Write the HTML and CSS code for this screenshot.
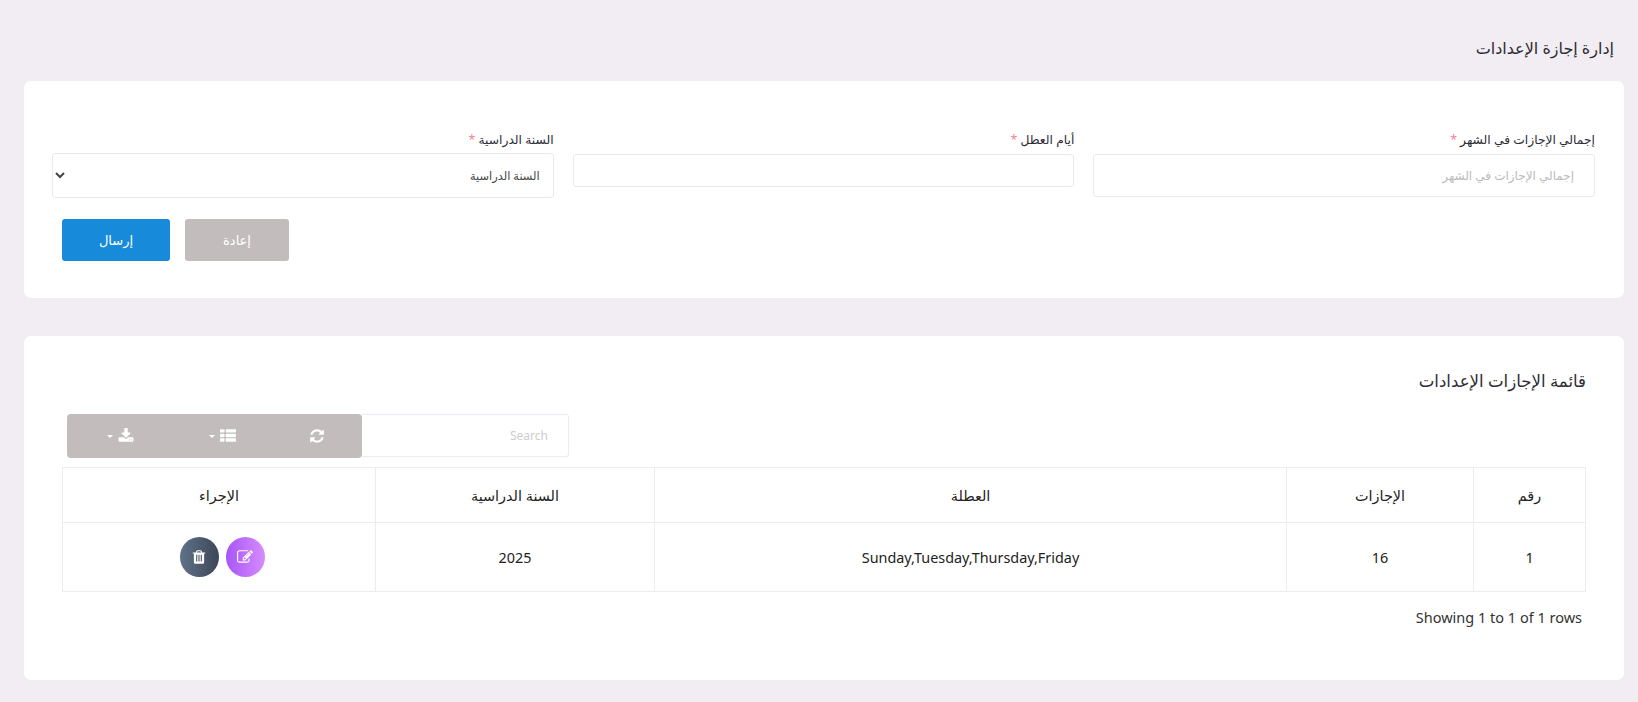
FILE: index.html
```html
<!DOCTYPE html>
<html lang="ar" dir="rtl">
<head>
  <meta charset="UTF-8"/>
  <meta name="viewport" content="width=device-width,initial-scale=1.0"/>
  <title>إدارة إجازة الإعدادات</title>
  <link rel="stylesheet" href="styles.css">
</head>
<body>
<h1 class="page-title">إدارة إجازة الإعدادات</h1>

<section class="card form-card">
  <form class="form-grid">
    <div class="field">
      <label for="total">إجمالي الإجازات في الشهر <span class="req">*</span></label>
      <input type="text" id="total" class="tall" placeholder="إجمالي الإجازات في الشهر"/>
    </div>
    <div class="field">
      <label for="holidays">أيام العطل <span class="req">*</span></label>
      <input type="text" id="holidays"/>
    </div>
    <div class="field">
      <label for="year">السنة الدراسية <span class="req">*</span></label>
      <select id="year"><option>السنة الدراسية</option></select>
    </div>
  </form>
  <div class="form-actions">
    <button type="button" class="btn btn-reset">إعادة</button>
    <button type="submit" class="btn btn-send">إرسال</button>
  </div>
</section>

<section class="card list-card">
  <h2 class="list-title">قائمة الإجازات الإعدادات</h2>
  <div class="toolbar">
    <input type="text" class="search" placeholder="Search" dir="rtl"/>
    <div class="tool-group">
      <button type="button" class="tool tool-refresh">
        <svg class="ico" viewBox="0 0 1792 1792"><path d="M1639 1056q0 5-1 7-64 268-268 434.5t-478 166.5q-146 0-282.5-55t-243.5-157l-129 129q-19 19-45 19t-45-19-19-45v-448q0-26 19-45t45-19h448q26 0 45 19t19 45-19 45l-137 137q71 66 161 102t187 36q134 0 250-65t186-179q11-17 53-117 8-23 30-23h192q13 0 22.5 9.5t9.5 22.5zm25-800v448q0 26-19 45t-45 19h-448q-26 0-45-19t-19-45 19-45l138-138q-148-137-349-137-134 0-250 65t-186 179q-11 17-53 117-8 23-30 23h-199q-13 0-22.5-9.5t-9.5-22.5v-7q65-268 270-434.5t480-166.5q146 0 284 55.5t245 156.5l130-129q19-19 45-19t45 19 19 45z"/></svg>
      </button>
      <button type="button" class="tool tool-columns">
        <svg class="ico" viewBox="0 0 1792 1792"><path d="M512 1248v192q0 40-28 68t-68 28h-320q-40 0-68-28t-28-68v-192q0-40 28-68t68-28h320q40 0 68 28t28 68zm0-512v192q0 40-28 68t-68 28h-320q-40 0-68-28t-28-68v-192q0-40 28-68t68-28h320q40 0 68 28t28 68zm1280 512v192q0 40-28 68t-68 28h-960q-40 0-68-28t-28-68v-192q0-40 28-68t68-28h960q40 0 68 28t28 68zm-1280-1024v192q0 40-28 68t-68 28h-320q-40 0-68-28t-28-68v-192q0-40 28-68t68-28h320q40 0 68 28t28 68zm1280 512v192q0 40-28 68t-68 28h-960q-40 0-68-28t-28-68v-192q0-40 28-68t68-28h960q40 0 68 28t28 68zm0-512v192q0 40-28 68t-68 28h-960q-40 0-68-28t-28-68v-192q0-40 28-68t68-28h960q40 0 68 28t28 68z"/></svg>
        <span class="caret"></span>
      </button>
      <button type="button" class="tool tool-export">
        <svg class="ico" viewBox="0 0 1792 1792"><path d="M1344 1344q0-26-19-45t-45-19-45 19-19 45 19 45 45 19 45-19 19-45zm256 0q0-26-19-45t-45-19-45 19-19 45 19 45 45 19 45-19 19-45zm128-224v320q0 40-28 68t-68 28h-1472q-40 0-68-28t-28-68v-320q0-40 28-68t68-28h465l135 136q58 56 136 56t136-56l136-136h464q40 0 68 28t28 68zm-325-569q17 41-14 70l-448 448q-18 19-45 19t-45-19l-448-448q-31-29-14-70 17-39 59-39h256v-448q0-26 19-45t45-19h256q26 0 45 19t19 45v448h256q42 0 59 39z"/></svg>
        <span class="caret"></span>
      </button>
    </div>
  </div>

  <table class="list-table">
    <thead>
      <tr>
        <th class="col-no">رقم</th>
        <th class="col-leaves">الإجازات</th>
        <th class="col-holiday">العطلة</th>
        <th class="col-year">السنة الدراسية</th>
        <th>الإجراء</th>
      </tr>
    </thead>
    <tbody>
      <tr>
        <td>1</td>
        <td>16</td>
        <td>Sunday,Tuesday,Thursday,Friday</td>
        <td>2025</td>
        <td>
          <div class="row-actions">
            <a class="round round-edit">
              <svg class="ico" viewBox="0 0 1792 1792"><path d="M888 1184l116-116-152-152-116 116v56h96v96h56zm440-720q-16-16-33 1l-350 350q-17 17-1 33t33-1l350-350q17-17 1-33zm80 594v190q0 119-84.5 203.5t-203.5 84.5h-832q-119 0-203.5-84.5t-84.5-203.5v-832q0-119 84.5-203.5t203.5-84.5h832q63 0 117 25 15 7 18 23 3 17-9 29l-49 49q-14 14-32 8-23-6-45-6h-832q-66 0-113 47t-47 113v832q0 66 47 113t113 47h832q66 0 113-47t47-113v-126q0-13 9-22l64-64q15-15 35-7t20 29zm-96-738l288 288-672 672h-288v-288zm444 132l-92 92-288-288 92-92q28-28 68-28t68 28l152 152q28 28 28 68t-28 68z"/></svg>
            </a>
            <a class="round round-trash">
              <svg class="ico" viewBox="0 0 1792 1792"><path d="M704 1376v-704q0-14-9-23t-23-9h-64q-14 0-23 9t-9 23v704q0 14 9 23t23 9h64q14 0 23-9t9-23zm256 0v-704q0-14-9-23t-23-9h-64q-14 0-23 9t-9 23v704q0 14 9 23t23 9h64q14 0 23-9t9-23zm256 0v-704q0-14-9-23t-23-9h-64q-14 0-23 9t-9 23v704q0 14 9 23t23 9h64q14 0 23-9t9-23zm-544-992h448l-48-117q-7-9-17-11h-317q-10 2-17 11zm928 32v64q0 14-9 23t-23 9h-96v948q0 83-47 143.5t-113 60.5h-832q-66 0-113-58.5t-47-141.5v-952h-96q-14 0-23-9t-9-23v-64q0-14 9-23t23-9h309l70-167q15-37 54-63t79-26h320q40 0 79 26t54 63l70 167h309q14 0 23 9t9 23z"/></svg>
            </a>
          </div>
        </td>
      </tr>
    </tbody>
  </table>
  <p class="rows-info" dir="ltr">Showing 1 to 1 of 1 rows</p>
</section>
</body>
</html>
```

FILE: styles.css
```css
html, body { margin:0; padding:0; }
body { background:#f1edf3; color:#2c2c35; font-family:"Noto Sans","DejaVu Sans",sans-serif; font-size:14px; height:702px; overflow:hidden; }

.page-title { margin:0; padding:36px 24px 0 0; font-size:16px; line-height:24px; font-weight:400; height:45px; }

.card { background:#fff; border-radius:7px; margin:0 14px 0 24px; }
.form-card { height:217px; padding:49px 29px 0 28px; box-sizing:border-box; }
.list-card { height:344px; margin-top:38px; padding:33px 38px 0 38px; box-sizing:border-box; }

.form-grid { display:grid; grid-template-columns:repeat(3,1fr); gap:19px; align-items:start; }
.field { display:flex; flex-direction:column; }
.field label { font-size:12.3px; line-height:20px; height:20px; margin-bottom:4px; }
.req { color:#f5838f; }
.field input, .field select { box-sizing:border-box; border:1px solid #e9e9f0; border-radius:3px; background:#fff; font:inherit; font-size:12px; color:#444; outline:none; }
.field input { height:33px; padding:0 20px; }
.field input.tall { height:43px; }
.field input::placeholder { color:#bbb; }
.field select { height:45px; padding:0 9px; margin-top:-1px; font-size:11.4px; }

.form-actions { display:flex; justify-content:flex-end; gap:15px; margin:21px 0 0 10px; }
.btn { height:42px; border:none; border-radius:3px; color:#fff; font:inherit; font-size:13px; cursor:pointer; }
.btn-reset { width:104px; background:#c2bcbc; }
.btn-send { width:108px; background:#178bd9; }

.list-title { margin:0; font-size:16.6px; line-height:24px; font-weight:400; }
.toolbar { display:flex; justify-content:flex-end; align-items:flex-start; margin:21px 0 9px 5px; direction:ltr; flex-direction:row-reverse; }
.search { box-sizing:border-box; width:207px; height:43px; border:1px solid #ebebf3; border-radius:0 3px 3px 0; border-left:none; padding:0 20px; font:inherit; font-size:12px; outline:none; }
.search::placeholder { color:#ccc; }
.tool-group { display:flex; flex-direction:row; direction:ltr; background:#c2bcbc; border-radius:4px; height:44px; width:295px; }
.tool { display:flex; align-items:center; justify-content:center; gap:5px; flex-direction:row-reverse; background:none; border:none; color:#fff; padding:0; height:44px; cursor:pointer; }
.tool-export { width:107px; order:1; }
.tool-columns { width:97px; order:2; }
.tool-refresh { width:91px; order:3; }
.ico { width:16px; height:16px; fill:currentColor; display:block; }
.caret { width:0; height:0; border-top:3px solid #fff; border-left:3px solid transparent; border-right:3px solid transparent; }

.list-table { width:100%; border-collapse:collapse; table-layout:fixed; font-size:14.4px; color:#222; }
.list-table th, .list-table td { border:1px solid #ebebf2; text-align:center; font-weight:400; padding:0; }
.list-table thead tr { height:55px; }
.list-table tbody tr { height:69px; }
.col-no { width:111px; }
.col-leaves { width:186px; }
.col-holiday { width:631px; }
.col-year { width:278px; }

.row-actions { display:flex; justify-content:center; gap:7px; padding-left:6px; }
.round { width:39px; height:40px; border-radius:50%; display:flex; align-items:center; justify-content:center; color:#fff; }
.round-edit { background:linear-gradient(90deg,#a855f7,#d68cff); }
.round-trash { background:linear-gradient(90deg,#5f7189,#3d4756); }

.rows-info { margin:15px 4px 0 0; text-align:right; font-size:14.5px; line-height:20px; color:#333; }
```
